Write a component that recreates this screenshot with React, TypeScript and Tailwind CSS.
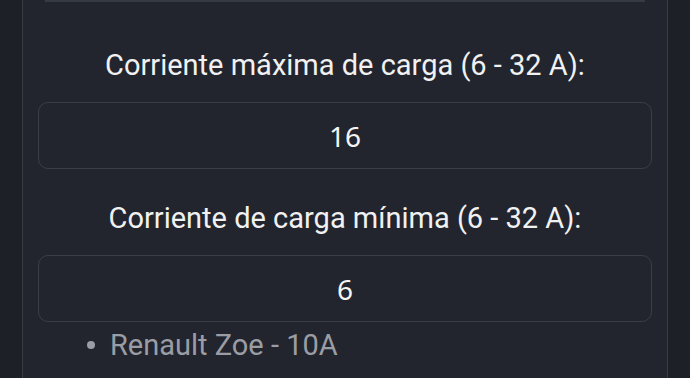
const FIELDS = [
  { label: 'Corriente máxima de carga (6 - 32 A):', value: '16' },
  { label: 'Corriente de carga mínima (6 - 32 A):', value: '6' },
]

export default function App() {
  return (
    <div className="h-[378px] w-[690px] overflow-hidden bg-[#1d2027] px-[22px] font-['Roboto',sans-serif]">
      <div className="h-full border-x border-[#393c44] bg-[#22252e] px-[15px]">
        <div className="mx-[7px] h-[2px] bg-[#363a43]" />
        <div className="pt-[43px]">
          {FIELDS.map((f, i) => (
            <div key={f.label} className={i > 0 ? 'mt-[29px]' : ''}>
              <div className="text-center text-[29px] leading-[40px] text-[#f1f1f2]">{f.label}</div>
              <div className="mt-[17px] flex h-[67px] items-center justify-center rounded-[10px] border border-[#3a3e48] font-['Noto_Sans',sans-serif] text-[28px] text-[#f5f5f5]">
                {f.value}
              </div>
            </div>
          ))}
          <div className="mt-[3px] flex items-center pl-[49px] text-[29px] leading-[40px] text-[#9b9da4]">
            <span className="mr-[15px] h-[8px] w-[8px] rounded-full bg-[#9b9da4]" />
            Renault Zoe - 10A
          </div>
        </div>
      </div>
    </div>
  )
}
